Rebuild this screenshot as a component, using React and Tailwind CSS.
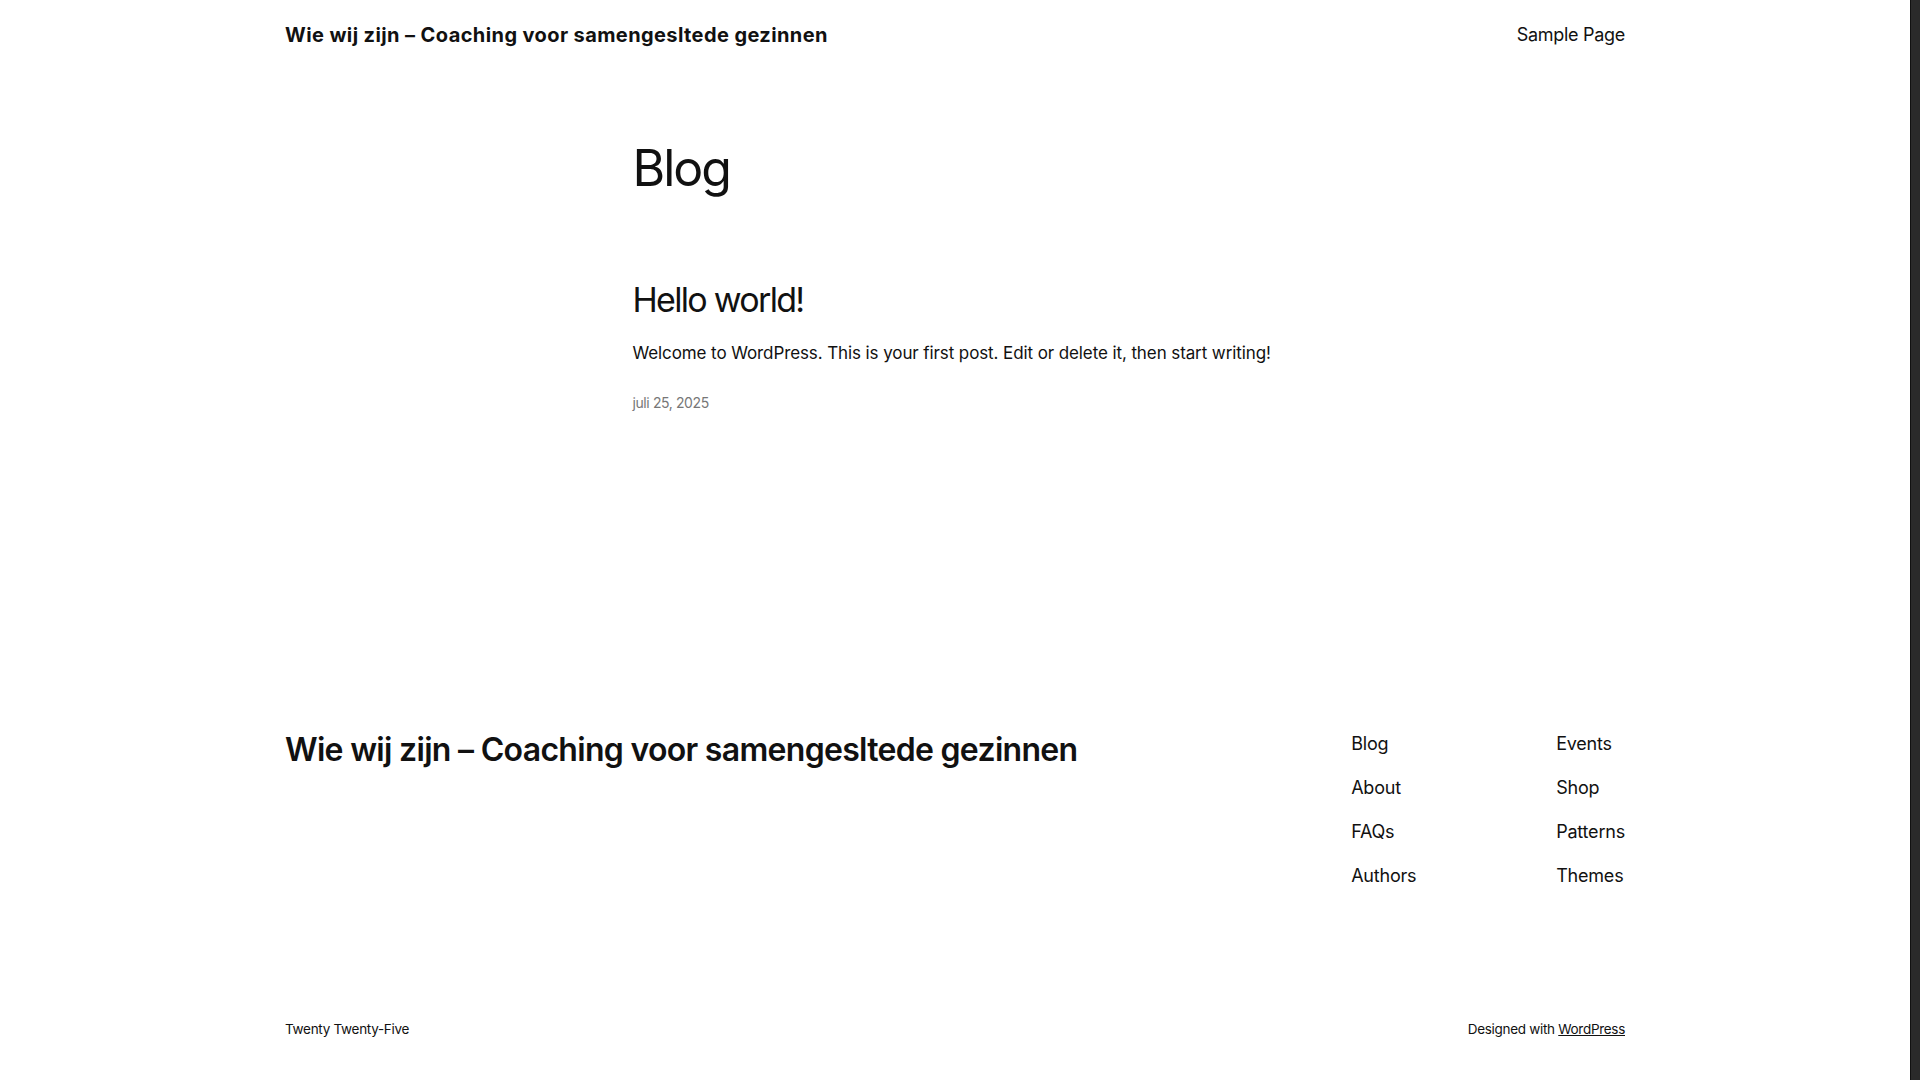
export default function App() {
  const font = { fontFamily: 'Inter, "Noto Sans", sans-serif' };
  return (
    <div className="flex min-h-[1080px] bg-white text-[#111111]" style={font}>
      <div className="flex flex-1 flex-col">
        <header className="mx-auto flex h-[69px] w-[1340px] items-center justify-between">
          <div className="text-[20px] font-bold tracking-[0.4px]">
            Wie wij zijn – Coaching voor samengesltede gezinnen
          </div>
          <nav className="text-[18px] tracking-[-0.3px]">Sample Page</nav>
        </header>

        <main className="mx-auto w-[645px] pt-[72px]">
          <h1 className="text-[50px] leading-[1.1] font-normal tracking-[-2px]">Blog</h1>
          <article className="pt-[84px]">
            <h2 className="text-[34px] leading-[1.2] font-normal tracking-[-1.7px]">Hello world!</h2>
            <p className="mt-[20px] whitespace-nowrap text-[17px] leading-[1.5] tracking-[-0.1px]">
              Welcome to WordPress. This is your first post. Edit or delete it, then start writing!
            </p>
            <div className="mt-[26px] text-[14px] tracking-[-0.4px] text-[#777777]">juli 25, 2025</div>
          </article>
        </main>

        <footer className="mx-auto mt-[314px] w-[1340px]">
          <div className="flex items-start justify-between">
            <div className="mt-[4px] text-[32px] leading-[1.2] font-semibold tracking-[-0.7px]">
              Wie wij zijn – Coaching voor samengesltede gezinnen
            </div>
            <div className="mt-[5px] flex text-[18px] tracking-[-0.2px]">
              <ul className="flex w-[205px] flex-col gap-[20px] leading-[24px]">
                <li>Blog</li>
                <li>About</li>
                <li>FAQs</li>
                <li>Authors</li>
              </ul>
              <ul className="flex flex-col gap-[20px] leading-[24px]">
                <li>Events</li>
                <li>Shop</li>
                <li>Patterns</li>
                <li>Themes</li>
              </ul>
            </div>
          </div>
          <div className="mt-[131px] flex items-center justify-between pb-[30px] text-[13.5px] tracking-[-0.3px]">
            <div>Twenty Twenty-Five</div>
            <div>
              Designed with <span className="underline">WordPress</span>
            </div>
          </div>
        </footer>
      </div>
      <div className="w-[10px] shrink-0 border-l border-[#111111] bg-[#2a2a2a]" />
    </div>
  );
}
